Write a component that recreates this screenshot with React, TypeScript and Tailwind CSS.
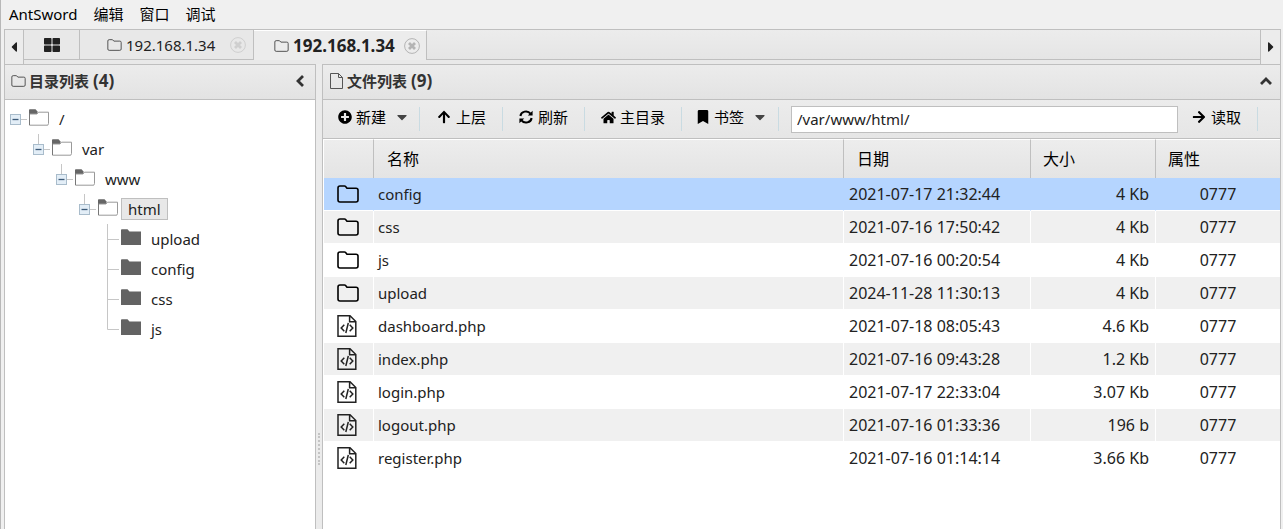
import React from "react";
import {
  FaPlusCircle,
  FaArrowUp,
  FaHome,
  FaBookmark,
  FaArrowRight,
  FaCaretDown,
  FaCaretLeft,
  FaCaretRight,
  FaThLarge,
} from "react-icons/fa";

function FolderOutline({ className, stroke = 1.2 }: { className: string; stroke?: number }) {
  return (
    <svg viewBox="0 0 22 18" className={className} fill="none" stroke="currentColor" strokeWidth={stroke} strokeLinejoin="round" aria-hidden="true">
      <path d="M1 3V15Q1 17 3 17H19Q21 17 21 15V5Q21 3.2 19 3.2H10L8.6 1.5Q8.2 1 7.5 1H3Q1 1 1 3Z" />
    </svg>
  );
}

function FileIcon() {
  return (
    <svg viewBox="0 0 14 16" className="h-4 w-3.5 text-[#555]" fill="none" stroke="currentColor" aria-hidden="true">
      <path d="M.5 .5H8.5L12.5 4.5V15.5H.5Z M8.5 .5V4.5H12.5" />
    </svg>
  );
}

function CodeFileIcon() {
  return (
    <svg viewBox="0 0 20 22" className="h-[22px] w-5" fill="none" stroke="currentColor" strokeWidth="1.5" aria-hidden="true">
      <path d="M1 .8H13L18.8 6.5V21.2H1Z M12.6 .8V6.8H18.8" />
      <path d="M7.3 9.8L4.2 13L7.3 16.2 M12.7 9.8L15.8 13L12.7 16.2 M11.3 8L8.8 18" />
    </svg>
  );
}

function RefreshIcon() {
  return (
    <svg viewBox="0 0 14 14" className="h-3.5 w-3.5" fill="none" stroke="currentColor" strokeWidth="2" aria-hidden="true">
      <path d="M1.4 6A5.6 5.2 0 0 1 11.5 3.6 M12.6 8A5.6 5.2 0 0 1 2.5 10.4" />
      <path d="M13.6 .8V5.6H8.8Z M.4 13.2V8.4H5.2Z" fill="currentColor" stroke="none" />
    </svg>
  );
}

function Chevron({ d }: { d: string }) {
  return (
    <svg viewBox="0 0 12 12" className="h-3 w-3" fill="none" stroke="#333" strokeWidth="2.8" aria-hidden="true">
      <path d={d} />
    </svg>
  );
}

function CloseIcon({ faded }: { faded?: boolean }) {
  return (
    <svg viewBox="0 0 16 16" className="h-4 w-4" fill="none" stroke={faded ? "#cfcfcf" : "#b4b4b4"} aria-hidden="true">
      <circle cx="8" cy="8" r="7.4" />
      <path d="M5 5L11 11M11 5L5 11" strokeWidth="2.8" />
    </svg>
  );
}

function TreeFolder({ open }: { open: boolean }) {
  return open ? (
    <svg viewBox="0 0 20 17" className="mb-1 h-[17px] w-5" aria-hidden="true">
      <path d="M0 5V1Q0 .3 .8 .3H6.5L8.5 2.5V5Z" fill="#666" />
      <path d="M.5 16.2V5H8L9.5 3.2H19.5V14.5L18.8 16.2Z" fill="#fff" stroke="#999" />
      <path d="M.5 16V5" stroke="#777" />
    </svg>
  ) : (
    <svg viewBox="0 0 20 17" className="mb-1 h-[17px] w-5" aria-hidden="true">
      <path d="M0 16V1.2Q0 .3 .8 .3H6.5L8.5 2.5H20V16Z" fill="#636363" />
    </svg>
  );
}

function Toggle({ joined }: { joined: boolean }) {
  return (
    <svg viewBox="0 0 23 30" className="h-[30px] w-[23px] shrink-0" fill="none" aria-hidden="true">
      {joined && <path d="M10.5 0V11" stroke="#c6c6c6" />}
      <path d="M16 15.5H22" stroke="#c6c6c6" />
      <rect x="5.5" y="10.5" width="10" height="10" fill="#e3eef7" stroke="#a9bccb" />
      <path d="M7.5 15.5H13.5" stroke="#3c5a78" strokeWidth="1.3" />
    </svg>
  );
}

function Branch({ last }: { last: boolean }) {
  return (
    <svg viewBox="0 0 23 30" className="h-[30px] w-[23px] shrink-0" fill="none" stroke="#c6c6c6" aria-hidden="true">
      <path d={last ? "M10.5 0V15.5H22" : "M10.5 0V30M10.5 15.5H22"} />
    </svg>
  );
}

type Node = { name: string; indent: string; open: boolean; selected?: boolean; last?: boolean };

const nodes: Node[] = [
  { name: "/", indent: "pl-0", open: true },
  { name: "var", indent: "pl-[23px]", open: true },
  { name: "www", indent: "pl-[46px]", open: true },
  { name: "html", indent: "pl-[69px]", open: true, selected: true },
  { name: "upload", indent: "pl-[92px]", open: false },
  { name: "config", indent: "pl-[92px]", open: false },
  { name: "css", indent: "pl-[92px]", open: false },
  { name: "js", indent: "pl-[92px]", open: false, last: true },
];

const files = [
  ["config", "2021-07-17 21:32:44", "4 Kb"],
  ["css", "2021-07-16 17:50:42", "4 Kb"],
  ["js", "2021-07-16 00:20:54", "4 Kb"],
  ["upload", "2024-11-28 11:30:13", "4 Kb"],
  ["dashboard.php", "2021-07-18 08:05:43", "4.6 Kb"],
  ["index.php", "2021-07-16 09:43:28", "1.2 Kb"],
  ["login.php", "2021-07-17 22:33:04", "3.07 Kb"],
  ["logout.php", "2021-07-16 01:33:36", "196 b"],
  ["register.php", "2021-07-16 01:14:14", "3.66 Kb"],
];

function rowColor(i: number) {
  if (i === 0) return "bg-[#b5d5ff] border-[#b5d5ff]";
  return i % 2 ? "bg-[#f0f0f0] border-white" : "bg-white border-white";
}

function Separator() {
  return <span className="h-6 w-px bg-[#c9dbe2]" />;
}

export default function App() {
  return (
    <div className="flex min-h-screen flex-col border-l border-[#b8b8b8] bg-[#f0f0f0] pr-0.5 pl-[3px] font-['Noto_Sans','Noto_Sans_CJK_SC',sans-serif] text-[15px] leading-5 text-[#222]">
      <nav className="flex h-[29px] items-center gap-4 pb-0.5 pl-[5px] text-black">
        <button>AntSword</button>
        <button>编辑</button>
        <button>窗口</button>
        <button>调试</button>
      </nav>

      <div className="flex h-[35px] border border-b-0 border-[#bfbfbf] bg-[#e9e9e9]">
        <button aria-label="向左滚动" className="flex w-[19px] shrink-0 items-center justify-center border-r border-[#bfbfbf] bg-[#ececec]">
          <FaCaretLeft className="size-4" />
        </button>
        <div className="flex h-[30px] flex-1">
          <button aria-label="主页" className="flex w-14 items-center justify-center border-r border-b border-[#bfbfbf] bg-[#e8e8e8]">
            <FaThLarge className="size-4" />
          </button>
          <div className="flex w-[174px] items-center border-r border-b border-[#bfbfbf] bg-[#e8e8e8] pl-[27px]">
            <button className="flex flex-1 items-center gap-1">
              <FolderOutline className="h-3 w-[15px] text-[#555]" stroke={1.5} />
              192.168.1.34
            </button>
            <button aria-label="关闭" className="pr-[7px]">
              <CloseIcon faded />
            </button>
          </div>
          <div className="flex w-[173px] items-center border-t border-r border-t-white border-r-[#bfbfbf] bg-[#ececec] pl-5">
            <button className="flex flex-1 items-center gap-1 text-[17px] font-bold">
              <FolderOutline className="h-3 w-[15px] text-[#555]" stroke={1.5} />
              192.168.1.34
            </button>
            <button aria-label="关闭" className="pr-1.5">
              <CloseIcon />
            </button>
          </div>
          <div className="flex-1 border-b border-[#bfbfbf] bg-linear-to-b from-[#ececec] to-[#e5e5e5]" />
        </div>
        <button aria-label="向右滚动" className="flex w-5 shrink-0 items-center justify-center border-l border-[#bfbfbf] bg-[#ececec]">
          <FaCaretRight className="size-4" />
        </button>
      </div>

      <main className="flex flex-1 bg-[#ebebeb]">
        <aside className="flex w-[312px] shrink-0 flex-col border border-b-0 border-[#bfbfbf]">
          <header className="flex h-[35px] items-center border-b border-[#bfbfbf] bg-linear-to-b from-[#ececec] to-[#e3e3e3] px-1.5 pb-0.5 text-[#333]">
            <FolderOutline className="h-3 w-[15px] text-[#555]" stroke={1.5} />
            <h2 className="ml-[3px] flex-1 font-bold">
              目录列表 <span className="text-[17px]">(4)</span>
            </h2>
            <button aria-label="收起目录" className="pr-[3px]">
              <Chevron d="M9 1L4 6L9 11" />
            </button>
          </header>
          <ul className="flex-1 bg-white pt-1">
            {nodes.map((n) => (
              <li key={n.name} className={`flex h-[30px] items-center ${n.indent}`}>
                {n.open ? <Toggle joined={n.name !== "/"} /> : <Branch last={!!n.last} />}
                <span className="pl-px">
                  <TreeFolder open={n.open} />
                </span>
                <button className={n.selected ? "ml-[3px] border border-[#bfbfbf] bg-[#e8e8e8] px-1.5" : "ml-1 px-1.5"}>{n.name}</button>
              </li>
            ))}
          </ul>
        </aside>

        <div className="flex w-1.5 shrink-0 flex-col items-center justify-end pb-16">
          <span className="h-8 border-l-2 border-dotted border-[#c4c4c4]" />
        </div>

        <section className="flex min-w-0 flex-1 flex-col border border-b-0 border-[#bfbfbf]">
          <header className="flex h-[35px] items-center border-b border-[#bfbfbf] bg-linear-to-b from-[#ececec] to-[#e3e3e3] px-[7px] pb-0.5 text-[#333]">
            <FileIcon />
            <h2 className="ml-[3px] flex-1 font-bold">
              文件列表 <span className="text-[17px]">(9)</span>
            </h2>
            <button aria-label="收起文件" className="pr-px">
              <Chevron d="M1 9L6 4L11 9" />
            </button>
          </header>

          <div className="flex h-[39px] items-center border-b border-[#bfbfbf] bg-linear-to-b from-[#ececec] to-[#e6e6e6] text-black">
            <button className="flex w-24 items-center gap-1 pb-1 pl-[15px]">
              <FaPlusCircle className="size-3.5" />
              新建
              <FaCaretDown className="ml-1 size-4 text-[#444]" />
            </button>
            <Separator />
            <button className="flex w-[82px] items-center gap-[5px] pb-1 pl-[17px]">
              <FaArrowUp className="size-3.5" />
              上层
            </button>
            <Separator />
            <button className="flex w-[81px] items-center gap-[5px] pb-1 pl-4">
              <RefreshIcon />
              刷新
            </button>
            <Separator />
            <button className="flex w-24 items-center gap-1 pb-1 pl-4">
              <FaHome className="size-[15px]" />
              主目录
            </button>
            <Separator />
            <button className="flex w-24 items-center gap-1 pb-1 pl-3.5">
              <FaBookmark className="size-3.5" />
              书签
              <FaCaretDown className="ml-1 size-4 text-[#444]" />
            </button>
            <Separator />
            <input
              aria-label="路径"
              defaultValue="/var/www/html/"
              className="ml-3 h-[27px] min-w-0 flex-1 border border-[#bfbfbf] bg-white px-[5px] text-[#222]"
            />
            <button className="mr-4 flex items-center gap-[5px] pb-1 pl-3.5">
              <FaArrowRight className="size-3.5" />
              读取
            </button>
            <Separator />
            <span className="w-[22px]" />
          </div>

          <div className="flex-1 bg-white pl-px">
            <table className="w-full table-fixed border-separate border-spacing-0">
              <colgroup>
                <col className="w-[50px]" />
                <col />
                <col className="w-[187px]" />
                <col className="w-[125px]" />
                <col className="w-[124px]" />
              </colgroup>
              <thead>
                <tr className="h-[39px] bg-linear-to-b from-[#ededed] to-[#e4e4e4] text-left text-base text-black">
                  <th className="border-t border-r border-t-white border-r-[#bfbfbf]" aria-label="类型" />
                  <th className="border-t border-r border-t-white border-r-[#bfbfbf] pl-[13px] font-normal">名称</th>
                  <th className="border-t border-r border-t-white border-r-[#bfbfbf] pl-[13px] font-normal">日期</th>
                  <th className="border-t border-r border-t-white border-r-[#bfbfbf] pl-3 font-normal">大小</th>
                  <th className="border-t border-t-white pl-3 font-normal">属性</th>
                </tr>
              </thead>
              <tbody>
                {files.map(([name, date, size], i) => (
                  <tr key={name} className={`h-[33px] ${rowColor(i)}`}>
                    <td className="border-r border-b border-r-inherit border-b-white pl-[13px]">
                      {i < 4 ? <FolderOutline className="h-[18px] w-[22px] text-black" stroke={1.6} /> : <CodeFileIcon />}
                    </td>
                    <td className="border-r border-b border-r-inherit border-b-white pl-1">{name}</td>
                    <td className="border-r border-b border-r-inherit border-b-white pl-[5px] text-base">{date}</td>
                    <td className="border-r border-b border-r-inherit border-b-white pr-1.5 text-right text-base">{size}</td>
                    <td className="border-b border-b-white text-center text-base">0777</td>
                  </tr>
                ))}
              </tbody>
            </table>
          </div>
        </section>
      </main>
    </div>
  );
}
